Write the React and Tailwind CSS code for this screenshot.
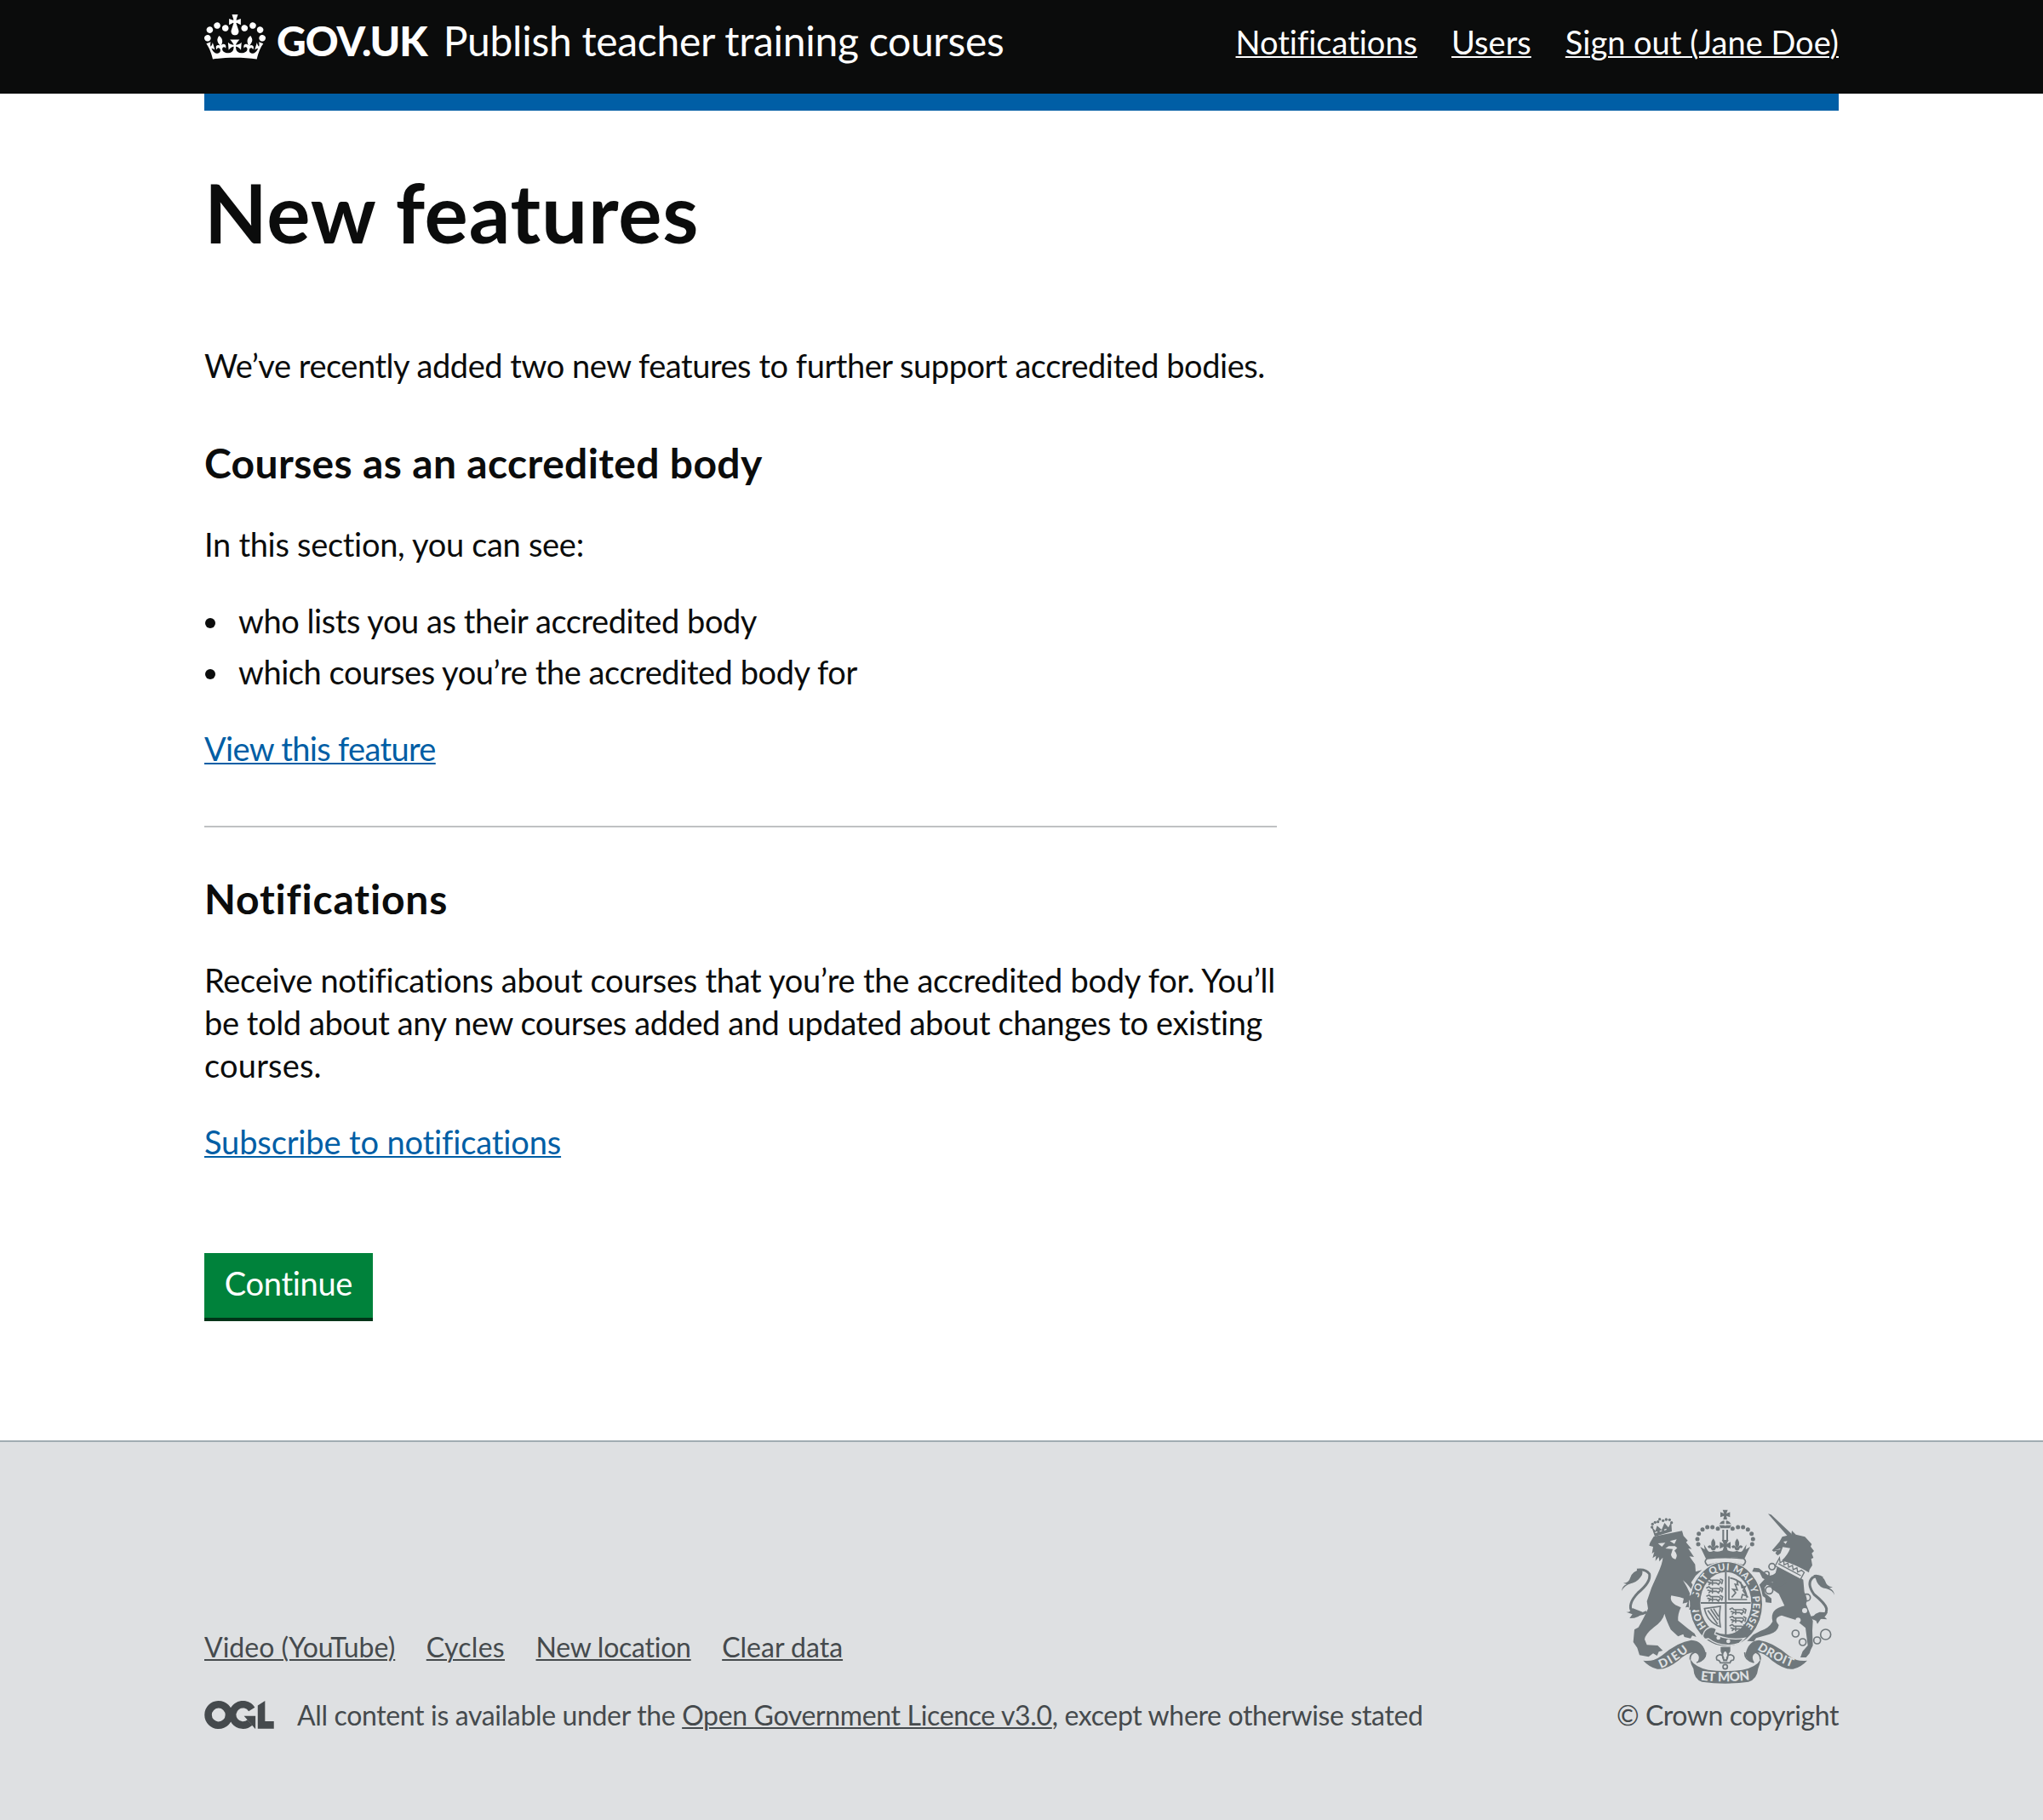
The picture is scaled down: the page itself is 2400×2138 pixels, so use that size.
import React from "react";

function CrownLogo() {
  return (
    <svg viewBox="0 0 132 97" className="h-[53px] w-[72px] shrink-0" fill="currentColor" aria-hidden="true">
      <path
        fillRule="evenodd"
        d="M25 30.2c3.5 1.5 7.7-.2 9.1-3.7 1.5-3.6-.2-7.8-3.9-9.2-3.6-1.4-7.6.3-9.1 3.9-1.4 3.5.3 7.5 3.9 9zM9 39.5c3.6 1.5 7.8-.2 9.2-3.7 1.5-3.6-.2-7.8-3.9-9.1-3.6-1.5-7.6.2-9.1 3.8-1.4 3.5.3 7.5 3.8 9zM4.4 57.2c3.5 1.5 7.7-.2 9.1-3.8 1.5-3.6-.2-7.7-3.9-9.1-3.5-1.5-7.6.3-9.1 3.8-1.4 3.5.3 7.6 3.9 9.1zm38.3-21.4c3.5 1.5 7.7-.2 9.1-3.8 1.5-3.6-.2-7.7-3.9-9.1-3.6-1.5-7.6.3-9.1 3.8-1.3 3.6.4 7.7 3.9 9.1zm64.4-5.6c-3.6 1.5-7.8-.2-9.1-3.7-1.5-3.6.2-7.8 3.8-9.2 3.6-1.4 7.7.3 9.2 3.9 1.3 3.5-.4 7.5-3.9 9zm15.9 9.3c-3.6 1.5-7.7-.2-9.1-3.7-1.5-3.6.2-7.8 3.7-9.1 3.6-1.5 7.7.2 9.2 3.8 1.5 3.5-.3 7.5-3.8 9zm4.7 17.7c-3.6 1.5-7.8-.2-9.2-3.8-1.5-3.6.2-7.7 3.9-9.1 3.6-1.5 7.7.3 9.2 3.8 1.3 3.5-.4 7.6-3.9 9.1zM89.3 35.8c-3.6 1.5-7.8-.2-9.2-3.8-1.4-3.6.2-7.7 3.9-9.1 3.6-1.5 7.7.3 9.2 3.8 1.4 3.6-.3 7.7-3.9 9.1zM69.7 17.7l8.9 4.7V9.3l-8.9 2.8c-.2-.3-.5-.6-.9-.9L72.4 0H59.6l3.5 11.2c-.3.3-.6.5-.9.9l-8.8-2.8v13.1l8.8-4.7c.3.3.6.7.9.9l-5 15.4v.1c-.2.8-.4 1.6-.4 2.4 0 4.1 3.1 7.5 7 8.1h.2c.3 0 .7.1 1 .1.4 0 .7 0 1-.1h.2c4-.6 7.1-4.1 7.1-8.1 0-.8-.1-1.7-.4-2.4V34l-5.1-15.4c.4-.2.7-.6 1-.9zM66 92.8c16.9 0 32.8 1.1 47.1 3.2 4-16.9 8.9-26.7 14-33.5l-9.6-3.4c1 4.9 1.1 7.2 0 10.2-1.5-1.4-3-4.3-4.2-8.7L108.6 76c2.8-2 5-3.2 7.5-3.3-4.4 9.4-10 11.9-13.6 11.2-4.3-.8-6.3-4.6-5.6-7.9 1-4.7 5.7-5.9 8-.5 4.3-8.7-3-11.4-7.6-8.8 7.1-7.2 7.9-13.5 2.1-21.1-8 6.1-8.1 12.3-4.5 20.8-4.7-5.4-12.1-2.5-9.5 6.2 3.4-5.2 7.9-2 7.2 3.1-.6 4.3-6.4 7.8-13.5 7.2-10.3-.9-10.9-8-11.2-13.8 2.5-.5 7.1 1.8 11 7.3L80.2 60c-4.1 4.4-8 5.3-12.3 5.4 1.4-4.4 8-11.6 8-11.6H55.5s6.4 7.2 7.9 11.6c-4.2-.1-8-1-12.3-5.4l1.4 16.4c3.9-5.5 8.5-7.7 10.9-7.3-.3 5.8-.9 12.8-11.1 13.8-7.2.6-12.9-2.9-13.5-7.2-.7-5 3.8-8.3 7.1-3.1 2.7-8.7-4.6-11.6-9.4-6.2 3.7-8.5 3.6-14.7-4.6-20.8-5.8 7.6-5 13.9 2.2 21.1-4.7-2.6-11.9.1-7.7 8.8 2.3-5.5 7.1-4.2 8.1.5.7 3.3-1.3 7.1-5.7 7.9-3.5.7-9-1.8-13.5-11.2 2.5.1 4.7 1.3 7.5 3.3l-4.7-15.4c-1.2 4.4-2.7 7.2-4.3 8.7-1.1-3-.9-5.3 0-10.2l-9.5 3.4c5 6.9 9.9 16.7 14 33.5 14.8-2.1 30.8-3.2 47.7-3.2z"
      />
    </svg>
  );
}

/* Open Government Licence mark: two interlocking rings and an upright bar. */
function OglLogo() {
  return (
    <svg viewBox="0 0 483.2 195.7" className="h-[33px] w-[82px] shrink-0" fill="none" stroke="currentColor" strokeWidth="50.7" aria-hidden="true">
      <circle cx="97.8" cy="97.8" r="72.4" />
      <path d="M329 59A72.4 72.4 0 1 0 316 151" />
      <path stroke="none" fill="currentColor" d="M275 105.7h80v87.8h-3z" />
      <path stroke="none" fill="currentColor" d="M421.5 142.8V.1l-50.7 32.3v161.1h112.4v-50.7z" />
    </svg>
  );
}

const DOTS = [[381, 108], [362, 103], [344, 103], [327, 111], [314, 126], [309, 145], [312, 163]];
const RINGS = [[572, 242, 11], [553, 268, 9], [562, 325, 13], [695, 351, 12], [655, 478, 12], [680, 508, 12], [731, 502, 12], [761, 481, 18]];

function Fleur({ x, y }) {
  return (
    <g transform={`translate(${x} ${y})`}>
      <path d="M0-24Q-13-8-4 6H4Q13-8 0-24Z" />
      <path d="M-4 6Q-12-6-20 4Q-16 14-10 8Q-8 16-4 18H4Q8 16 10 8Q16 14 20 4Q12-6 4 6Z" />
    </g>
  );
}

function Leopards({ x, y }) {
  return (
    <g transform={`translate(${x} ${y})`} fill="none" strokeWidth="5" strokeLinecap="round" strokeLinejoin="round">
      {[0, 29, 58].map((dy) => (
        <path key={dy} d={`M4 ${4 + dy}l8-4 6 6h22q12-1 12 8l-6 4M8 ${12 + dy}l10 3-6 6M20 ${16 + dy}h18l8 6M24 ${10 + dy}v12M52 ${2 + dy}l8 4-3 12`} />
      ))}
    </g>
  );
}

function RoyalArms() {
  return (
    <svg viewBox="42 40 750 615" className="h-[205px] w-[250px]" fill="#6f777b" stroke="#6f777b" strokeWidth="0" aria-hidden="true">
      {/* crown */}
      <path d="M398 42h18l-5 13 13-5v18l-13-5 3 13h-14l3-13-13 5V50l13 5z" />
      <path d="M386 97a21 18 0 0 1 42 0l-5 10h-32z" />
      <path d="M404 76h6v22h-6zM386 92h42v4h-42z" fill="#dee0e2" />
      {DOTS.map(([x, y]) => (
        <g key={x}>
          <circle cx={x} cy={y} r="7.5" />
          <circle cx={814 - x} cy={y} r="7.5" />
        </g>
      ))}
      <path d="M397 112h6v38h-6zM411 112h6v38h-6z" />
      <path d="M395 148h24l-7 14 14-7v24l-14-7 4 14h-18l4-14-14 7v-24l14 7z" />
      <Fleur x={365} y={167} />
      <Fleur x={449} y={167} />
      <path d="M319 172l16 10-3-18 14 22q6 8 20 0 12 6 28 0 13-6 26 0 16 6 28 0 14 8 20 0l14-22-3 18 16-10-20 42Q407 203 339 214Z" />
      <path d="M343 214q-14 10 2 24Q407 218 470 238q16-14 2-24Q407 206 343 214z" fill="none" strokeWidth="5" />

      {/* lion */}
      <path d="M147 100l12 36 60-18-2-34-10 20-14-16-10 24-16-14-6 18z" />
      <path d="M160 122l8-2M176 118l8-3M192 113l8-3" stroke="#dee0e2" strokeWidth="4" />
      {[[149, 103], [151, 92], [160, 86], [170, 84], [176, 75], [188, 80], [199, 76], [211, 77], [218, 87]].map(([x, y]) => (
        <circle key={x} cx={x} cy={y} r="5" />
      ))}
      <path d="M142 158l13-22 100-20 5 18 15 16-6 6 20 24-12-2 20 30-16-2 20 28 2 26 22-6-22 20-16 24q24 30 30 80l-14 18-16 4-10-16-10 2 8-18-18 4 4-18-14-4-30-6q-10 26 34 42-12 24-10 46l34 28 24 18 6 12-14-5-6 10-22-5-4-10-18 8-26-24q-16-34-22-56-6 26-38 48-30 24-32 42l8 20 38 2 18 18-14 4-6 14-14-8-16 12-32-6-8-26-14-20 4-44 14-8q22-38 34-66l-4-26q14-48 38-96 18-40 18-58l-12 14-2-16-12 14 2-18-12 8 6-22-8 6 4-24-14-4z" />
      <path d="M170 160l26-2-12 14zM212 152l24-6-8 16zM196 178l12-8 22 0 8 6-10 10q14 14 4 30-14-2-16-16l6-20zM258 290q24 20 38 46l8 46-6 6q-10-52-40-98z" fill="#dee0e2" />
      <path d="M130 402q-34 18-52-2-16-26 22-66 46-38 40-66-12-18-44-14" fill="none" strokeWidth="9" />
      <path d="M42 328q2-18 18-24l-12-4q20-2 24-18 6-24 36-30 16 8 0 28-14 18-34 22-22 6-32 26zM58 402q16 2 22-14l36 14q-10 22-46 22l10-14z" />

      {/* unicorn */}
      <path d="M558 56l11 3 73 69-12 10z" />
      <path d="M572 185l26-30 10-18 32-8 2-14 14 14 32 8 24 26-4 8 12 16-8 8 6 16-8 4 4 22-10 16-2 10q-50-30-96-42 24-24 30-44l-26-4-8 22-10 8-8-8 4-8-10 2z" />
      <path d="M612 154l14-2-6 10zM582 184l20-6-2 4z" fill="#dee0e2" />
      <path d="M592 236l90 52 4 44q14 26 6 42l24 60-2 34 2 52q-8 14-12 28l-12 14h-20l8-22 18-20-8-62-34-28q-26-8-50-16-32 8-10 34-4 24-32 32l-48 14-8 12-24-2 22-22 26-14q28-8 42-32-12-44 42-56l-20-42-26-18z" />
      <path d="M598 242q-12 34-38 32l-34-26-18-2-6 14 26 2 10 20 28 16 50-6zM600 288q-20 22-54-2l-20 22 8 34 14 10 2 16 20 2v-16l-22-18-2-20 8-10q40 20 68-8z" />
      <g transform="translate(599 214) rotate(28)">
        <path d="M-2-2l10 14 8-12 8 12 9-12 9 12 9-12 9 12 9-12 9 12 9-12 12 2v28H-2z" fill="#dee0e2" strokeWidth="4" />
        <path d="M4 18h90" strokeWidth="4" />
      </g>
      <path d="M722 428q44-6 42-38-4-18-44-50-28-40-4-60 18-8 34 2" fill="none" strokeWidth="9" />
      <path d="M792 342q-2-18-18-24l12-4q-22-2-26-20-6-18-32-24l-10 2q10 12 12 24 10 22 34 24 22 6 28 22zM704 416q14 4 22-8l14-6 28 2-12 14 10 10-22-2-12 18-6-14q-14 2-22-14z" />
      {RINGS.map(([x, y, r]) => (
        <circle key={`${x}-${y}`} cx={x} cy={y} r={r} fill="none" strokeWidth="5" />
      ))}
      <circle cx="687" cy="397" r="9" fill="#dee0e2" />
      <circle cx="664" cy="431" r="9" fill="#dee0e2" />

      {/* garter */}
      <ellipse cx="410" cy="374" rx="129" ry="150" stroke="#dee0e2" strokeWidth="4" />
      <ellipse cx="409" cy="371" rx="90" ry="110" fill="#dee0e2" />
      <path id="garter-line" d="M341 453A96 116 0 1 1 466 464" fill="none" />
      <text fill="#dee0e2" fontFamily="Lato, sans-serif" fontSize="34" fontWeight="900">
        <textPath href="#garter-line" textLength="510">HONI SOIT QUI MAL Y PENSE</textPath>
      </text>
      <path d="M406 262h6v222h-6zM321 367h176v6H321z" />
      <Leopards x={338} y={284} />
      <Leopards x={420} y={388} />
      <path d="M420 276v82h64M430 350l14-16-10-12 16 2-8-20 10 2-4-16 14 8 4 18 12-4-8 14 14 20-16-6-4 14M424 282q50 8 60 70" fill="none" strokeWidth="5" />
      <path d="M334 390l56-8q-6 40 0 72-46-16-56-64zM346 396l34 48M356 392l26 38M366 390l18 28" fill="none" strokeWidth="5" />
      <path d="M334 470q20-24 42-8l-6 18q50 24 106 14l-20 18q-60 20-108-16-18 6-20-12z" stroke="#dee0e2" strokeWidth="4" />
      <circle cx="383" cy="493" r="7" fill="#dee0e2" />
      <circle cx="418" cy="505" r="7" fill="#dee0e2" />
      <path d="M272 350q14 12 12 30l-4 14h36q6-24-14-60z" />

      {/* pendant */}
      <path d="M391 525h34v16l-6 8 4 14h-32l4-14-4-8z" />
      <path d="M407 535q-16 16-5 36h10q11-20-5-36zM402 573q0-22-16-20-14 4-8 18 10 0 12 10h34q2-10 12-10 6-14-8-18-16-2-16 20z" fill="#dee0e2" strokeWidth="5" />
      <circle cx="407" cy="595" r="8" fill="#dee0e2" strokeWidth="5" />

      {/* motto ribbon */}
      <path d="M118 573q34 6 66-18 56-48 104-54 42 2 52 52-6 22-32 28 16-26-8-36-26-2-58 28-44 34-74 30-28-6-50-30z" />
      <path d="M696 573q-34 6-66-18-56-48-104-54-38 2-48 52 6 22 32 28-16-26 8-36 22-2 54 28 44 34 74 30 28-6 50-30z" />
      <path d="M284 570q-4-22 22-28M306 580q34-8 32-36M530 570q4-22-22-28M508 580q-34-8-32-36" fill="none" strokeWidth="5" />
      <path d="M283 568q20 30 64 38 60 8 120 0 48-8 66-38-4 18-10 34-4 38-34 46-82 12-164 0-28-8-30-46-10-16-12-34z" />
      <path id="motto-left" d="M180 600q40-12 108-68" fill="none" />
      <path id="motto-mid" d="M320 642q87 10 176-2" fill="none" />
      <path id="motto-right" d="M519 533q60 40 126 64" fill="none" />
      <g fill="#dee0e2" fontFamily="Lato, sans-serif" fontSize="42" fontWeight="900">
        <text><textPath href="#motto-left" textLength="116">DIEU</textPath></text>
        <text fontSize="45"><textPath href="#motto-mid" textLength="174">ET MON</textPath></text>
        <text><textPath href="#motto-right" textLength="138">DROIT</textPath></text>
      </g>
    </svg>
  );
}

const link = "underline decoration-2 underline-offset-[2px]";
const bullet = "mt-[22px] mr-[27px] ml-px size-[12px] rounded-full bg-[#0b0c0c]";

export default function App() {
  return (
    <div className="flex min-h-[2138px] flex-col bg-white font-[Lato,sans-serif] text-[38px] leading-[50px] text-[#0b0c0c] [font-variant-ligatures:none]">
      <header className="h-[110px] bg-[#0b0c0c] text-white">
        <div className="mx-auto flex w-[1920px] justify-between">
          <div className="flex items-start pt-[17px]">
            <CrownLogo />
            <span className="mt-px ml-[13px] text-[48px] leading-[60px] font-black tracking-[-1px]">GOV.UK</span>
            <span className="mt-px ml-[19px] text-[48px] leading-[60px] tracking-[-0.28px]">Publish teacher training courses</span>
          </div>
          <nav className="flex gap-[40px] pt-[24px]">
            <a className={link}>Notifications</a>
            <a className={link}>Users</a>
            <a className={link}>Sign out (Jane Doe)</a>
          </nav>
        </div>
      </header>
      <div className="mx-auto h-[20px] w-[1920px] bg-[#005ea5]" />

      <main className="mx-auto w-[1920px] grow pt-[69px]">
        <div className="w-[1260px] whitespace-nowrap">
          <h1 className="mb-[105px] text-[96px] leading-[100px] font-bold tracking-[0.8px]">New features</h1>
          <p className="mb-[60px] tracking-[-0.46px]">We’ve recently added two new features to further support accredited bodies.</p>
          <h2 className="mb-[40px] text-[48px] leading-[60px] font-bold tracking-[0.35px]">Courses as an accredited body</h2>
          <p className="mb-[40px] tracking-[-0.3px]">In this section, you can see:</p>
          <ul className="mb-[40px] flex flex-col gap-[10px] tracking-[-0.44px]">
            <li className="flex items-start">
              <i className={bullet} />
              <span>who lists you as their accredited body</span>
            </li>
            <li className="flex items-start">
              <i className={bullet} />
              <span>which courses you’re the accredited body for</span>
            </li>
          </ul>
          <p><a className={`${link} tracking-[-0.66px] text-[#005ea5]`}>View this feature</a></p>
          <hr className="mt-[66px] mb-[54px] border-0 border-t-2 border-[#bfc1c3]" />
          <h2 className="mb-[40px] text-[48px] leading-[60px] font-bold tracking-[0.8px]">Notifications</h2>
          <p className="mb-[40px]">
            <span className="tracking-[-0.26px]">Receive notifications about courses that you’re the accredited body for. You’ll</span><br />
            <span className="tracking-[-0.4px]">be told about any new courses added and updated about changes to existing</span><br />
            <span className="tracking-[0.2px]">courses.</span>
          </p>
          <p><a className={`${link} tracking-[-0.13px] text-[#005ea5]`}>Subscribe to notifications</a></p>
          <button className="mt-[106px] flex h-[76px] w-[198px] justify-center bg-[#00823b] pt-[10px] tracking-[-0.3px] text-white shadow-[0_4px_0_#003418]">Continue</button>
        </div>
      </main>

      <footer className="h-[446px] border-t-2 border-[#a1acb2] bg-[#dee0e2] text-[32px] leading-[40px] text-[#454a4d]">
        <div className="mx-auto flex w-[1920px] justify-between pt-[79px] whitespace-nowrap">
          <div className="pt-[142px]">
            <div className="flex gap-[36.5px]">
              <a className={link}>Video (YouTube)</a>
              <a className={`${link} tracking-[0.3px]`}>Cycles</a>
              <a className={`${link} tracking-[-0.25px]`}>New location</a>
              <a className={link}>Clear data</a>
            </div>
            <div className="mt-[40px] flex">
              <div className="mt-[3px] mr-[27px]"><OglLogo /></div>
              <div className="tracking-[-0.35px]">
                All content is available under the <a className={link}>Open Government Licence v3.0</a>, except where otherwise stated
              </div>
            </div>
          </div>
          <div className="flex w-[261px] flex-col items-center">
            <RoyalArms />
            <span className="mt-[17px] tracking-[-0.43px]">© Crown copyright</span>
          </div>
        </div>
      </footer>
    </div>
  );
}
